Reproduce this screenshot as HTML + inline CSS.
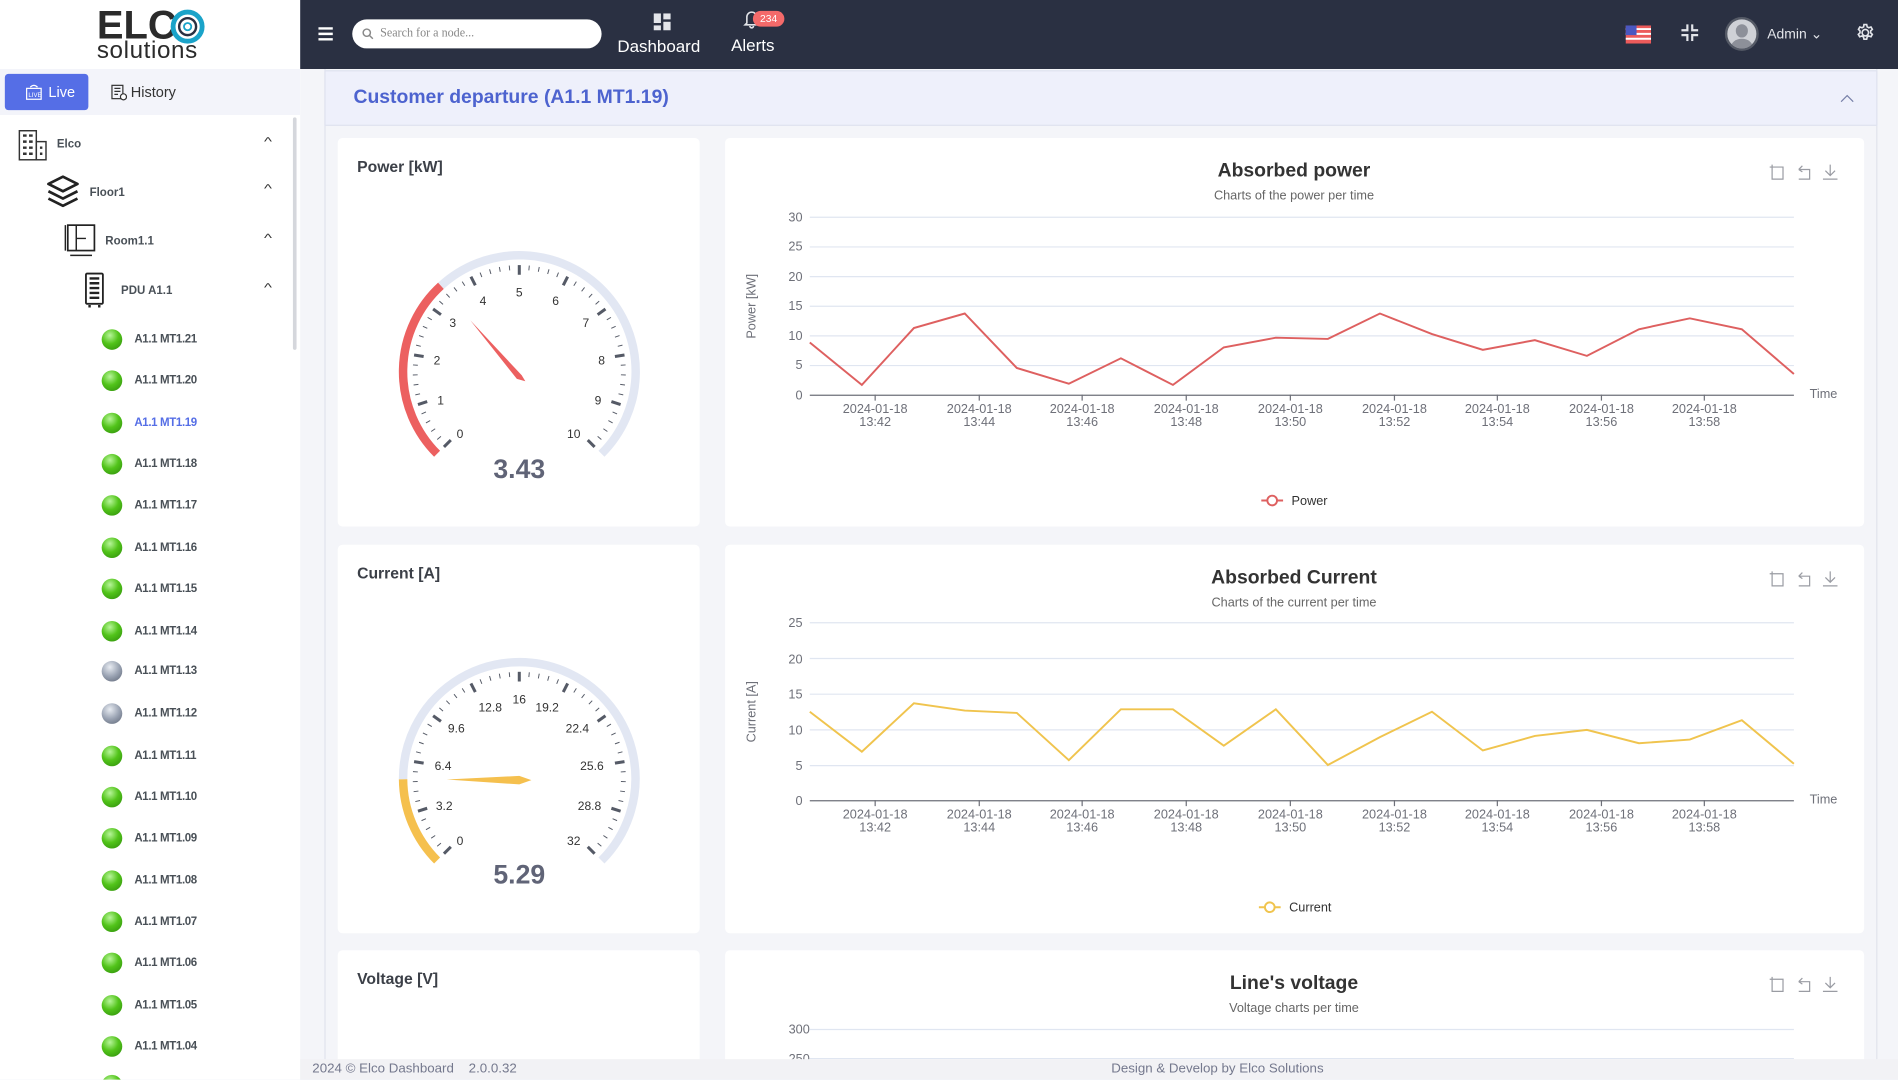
<!DOCTYPE html>
<html><head><meta charset="utf-8">
<style>
*{box-sizing:border-box;margin:0;padding:0}
html,body{width:1898px;height:1080px;overflow:hidden;background:#f4f5f9;font-family:"Liberation Sans",sans-serif}
#w{position:absolute;left:0;top:0;width:1568px;height:892px;transform:scale(1.21046);transform-origin:0 0;background:#f4f5f9;overflow:hidden}
.abs{position:absolute}
#side{left:0;top:0;width:248px;height:892px;background:#fff;overflow:hidden}
#hdr{left:248px;top:0;width:1320px;height:57px;background:#2a3042}
.card{position:absolute;background:#fff;border-radius:4px}
.item{position:absolute;left:84px;height:18px;font-size:9.5px;font-weight:bold;color:#495057;letter-spacing:-0.3px}
.ball{position:absolute;left:0;top:0;width:17px;height:17px;border-radius:50%;background:radial-gradient(circle at 40% 30%,#b8f59a 0%,#52c41a 45%,#2c8a0a 100%)}
.ball.g{background:radial-gradient(circle at 40% 30%,#e8ecf2 0%,#9aa3b3 50%,#5b6373 100%)}
.item span{position:absolute;left:27px;top:3px;white-space:nowrap}
svg text{font-family:"Liberation Sans",sans-serif}
</style></head><body>
<div id="w">
<!-- sidebar -->
<div id="side" class="abs">
  <div class="abs" style="left:80px;top:4px;font-size:33px;font-weight:bold;color:#2b2b2b;letter-spacing:0px;line-height:34px">ELC</div>
  <svg class="abs" style="left:140px;top:7px" width="32" height="30"><circle cx="15" cy="15" r="12" fill="none" stroke="#1aa3c9" stroke-width="4"/><circle cx="15" cy="15" r="7" fill="none" stroke="#2a3042" stroke-width="2"/><circle cx="15" cy="15" r="3" fill="none" stroke="#1aa3c9" stroke-width="1.5"/></svg>
  <div class="abs" style="left:80px;top:32px;font-size:20px;color:#2b2b2b;line-height:20px;letter-spacing:0.5px">solutions</div>
  <div class="abs" style="left:0;top:57px;width:248px;height:38px;background:#f3f4fa"></div>
  <div class="abs" style="left:4px;top:61px;width:69px;height:30px;background:#556ee6;border-radius:3px;color:#fff;font-size:12px;line-height:30px;padding-left:36px">Live</div>
  <svg class="abs" style="left:21px;top:69px" width="14" height="14"><rect x="1" y="4" width="12" height="9" fill="none" stroke="#fff"/><text x="2.5" y="11" font-size="5" fill="#fff">LIVE</text><path d="M4 3 Q7 0 10 3" stroke="#fff" fill="none"/></svg>
  <svg class="abs" style="left:91px;top:69px" width="14" height="14"><rect x="1.5" y="1.5" width="9" height="11" fill="none" stroke="#333"/><path d="M3.5 4h5M3.5 6.5h5M3.5 9h3" stroke="#333"/><circle cx="11" cy="11" r="2.5" fill="#fff" stroke="#333"/></svg>
  <div class="abs" style="left:108px;top:69px;font-size:12px;color:#333">History</div>
  <svg class="abs" style="left:14px;top:107px" width="26" height="26"><rect x="2" y="1" width="14" height="24" fill="none" stroke="#333" stroke-width="1.2"/><rect x="16" y="10" width="8" height="15" fill="none" stroke="#333" stroke-width="1.2"/><path d="M5 5h3M10 5h3M5 10h3M10 10h3M5 15h3M10 15h3M5 20h3M10 20h3M19 15h2M19 20h2" stroke="#333" stroke-width="2"/></svg>
  <div class="abs" style="left:47px;top:114px;font-size:9.5px;font-weight:bold;color:#495057">Elco</div>
  <svg class="abs" style="left:37px;top:143px" width="30" height="30"><path d="M15 3 L27 9 L15 15 L3 9Z M3 15 L15 21 L27 15 M3 21 L15 27 L27 21" fill="none" stroke="#222" stroke-width="2.2" stroke-linejoin="round"/></svg>
  <div class="abs" style="left:74px;top:154px;font-size:9.5px;font-weight:bold;color:#495057">Floor1</div>
  <svg class="abs" style="left:52px;top:184px" width="30" height="30"><rect x="4" y="2" width="22" height="21" fill="none" stroke="#222" stroke-width="1.4"/><path d="M11 2v21M11 13h8M2 2v21M6 27h18" stroke="#222" stroke-width="1.2"/></svg>
  <div class="abs" style="left:87px;top:194px;font-size:9.5px;font-weight:bold;color:#495057">Room1.1</div>
  <svg class="abs" style="left:69px;top:225px" width="20" height="30"><rect x="2" y="1" width="14" height="25" rx="1" fill="none" stroke="#222" stroke-width="1.5"/><path d="M5 5h8M5 9h8M5 13h8M5 17h8M5 21h8" stroke="#222" stroke-width="2"/><path d="M4 28h2M12 28h2" stroke="#222" stroke-width="2"/></svg>
  <div class="abs" style="left:100px;top:235px;font-size:9.5px;font-weight:bold;color:#495057">PDU A1.1</div>
  <div class="abs" style="left:219px;top:112px;font-size:10px;color:#333;transform:scaleX(1.4)">^</div>
  <div class="abs" style="left:219px;top:151px;font-size:10px;color:#333;transform:scaleX(1.4)">^</div>
  <div class="abs" style="left:219px;top:192px;font-size:10px;color:#333;transform:scaleX(1.4)">^</div>
  <div class="abs" style="left:219px;top:233px;font-size:10px;color:#333;transform:scaleX(1.4)">^</div>
  <div class="abs" style="left:242px;top:97px;width:3px;height:192px;background:#d5d7dc;border-radius:2px"></div>
  <div class="item" style="top:272px"><div class="ball"></div><span>A1.1 MT1.21</span></div>
  <div class="item" style="top:306px"><div class="ball"></div><span>A1.1 MT1.20</span></div>
  <div class="item" style="top:341px"><div class="ball"></div><span style="color:#556ee6">A1.1 MT1.19</span></div>
  <div class="item" style="top:375px"><div class="ball"></div><span>A1.1 MT1.18</span></div>
  <div class="item" style="top:409px"><div class="ball"></div><span>A1.1 MT1.17</span></div>
  <div class="item" style="top:444px"><div class="ball"></div><span>A1.1 MT1.16</span></div>
  <div class="item" style="top:478px"><div class="ball"></div><span>A1.1 MT1.15</span></div>
  <div class="item" style="top:513px"><div class="ball"></div><span>A1.1 MT1.14</span></div>
  <div class="item" style="top:546px"><div class="ball g"></div><span>A1.1 MT1.13</span></div>
  <div class="item" style="top:581px"><div class="ball g"></div><span>A1.1 MT1.12</span></div>
  <div class="item" style="top:616px"><div class="ball"></div><span>A1.1 MT1.11</span></div>
  <div class="item" style="top:650px"><div class="ball"></div><span>A1.1 MT1.10</span></div>
  <div class="item" style="top:684px"><div class="ball"></div><span>A1.1 MT1.09</span></div>
  <div class="item" style="top:719px"><div class="ball"></div><span>A1.1 MT1.08</span></div>
  <div class="item" style="top:753px"><div class="ball"></div><span>A1.1 MT1.07</span></div>
  <div class="item" style="top:787px"><div class="ball"></div><span>A1.1 MT1.06</span></div>
  <div class="item" style="top:822px"><div class="ball"></div><span>A1.1 MT1.05</span></div>
  <div class="item" style="top:856px"><div class="ball"></div><span>A1.1 MT1.04</span></div>
  <div class="item" style="top:888px"><div class="ball"></div></div>
</div>
<div id="hdr" class="abs">
  <svg class="abs" style="left:15px;top:22px" width="12" height="12"><path d="M0 1.5h12M0 6h12M0 10.5h12" stroke="#fff" stroke-width="2"/></svg>
  <div class="abs" style="left:43px;top:16px;width:206px;height:24px;background:#fff;border-radius:12px"></div>
  <svg class="abs" style="left:51px;top:23px" width="10" height="10"><circle cx="4" cy="4" r="3" fill="none" stroke="#888" stroke-width="1.2"/><path d="M6.3 6.3L9 9" stroke="#888" stroke-width="1.2"/></svg>
  <div class="abs" style="left:66px;top:22px;font-size:10px;color:#888;font-family:'Liberation Serif',serif">Search for a node...</div>
  <svg class="abs" style="left:292px;top:11px" width="15" height="15"><rect x="0" y="0" width="6" height="8" fill="#e3e5ea"/><rect x="8" y="0" width="6" height="5" fill="#e3e5ea"/><rect x="0" y="10" width="6" height="4" fill="#e3e5ea"/><rect x="8" y="7" width="6" height="7" fill="#e3e5ea"/></svg>
  <div class="abs" style="left:262px;top:30px;font-size:14px;color:#fff">Dashboard</div>
  <svg class="abs" style="left:366px;top:8px" width="14" height="16"><path d="M3 11 V6 A4 4 0 0 1 11 6 V11 L12.5 12.5 H1.5Z M5.5 13.5 A1.5 1.5 0 0 0 8.5 13.5" fill="none" stroke="#e3e5ea" stroke-width="1.3"/></svg>
  <div class="abs" style="left:374px;top:9px;width:26px;height:13px;background:#f46a6a;border-radius:7px;font-size:8.5px;color:#fff;text-align:center;line-height:13px">234</div>
  <div class="abs" style="left:356px;top:29px;font-size:14px;color:#fff">Alerts</div>
  <svg class="abs" style="left:1095px;top:21px" width="21" height="15"><rect width="21" height="15" fill="#ec5b5b"/><path d="M0 3h21M0 7h21M0 11h21" stroke="#fff" stroke-width="1.6"/><rect width="9" height="8" fill="#4a57c0"/></svg>
  <svg class="abs" style="left:1141px;top:20px" width="14" height="14"><path d="M5 0v5H0M9 0v5h5M5 14V9H0M9 14V9h5" fill="none" stroke="#e3e5ea" stroke-width="1.8"/></svg>
  <div class="abs" style="left:1177px;top:14px;width:28px;height:28px;border-radius:50%;background:#cfd1d6;border:2px solid #555a66;overflow:hidden"><div style="position:absolute;left:7px;top:4px;width:10px;height:11px;border-radius:50%;background:#8d9099"></div><div style="position:absolute;left:3px;top:16px;width:18px;height:14px;border-radius:50%;background:#8d9099"></div></div>
  <div class="abs" style="left:1212px;top:21px;font-size:11.5px;color:#e3e5ea">Admin ⌄</div>
  <svg class="abs" style="left:1285px;top:19px" width="16" height="16" viewBox="0 0 24 24"><path d="M12 8a4 4 0 1 0 0 8a4 4 0 1 0 0-8z M10.3 2h3.4l.6 2.8 2 1.1 2.7-.9 1.7 2.9-2.1 1.9v2.4l2.1 1.9-1.7 2.9-2.7-.9-2 1.1-.6 2.8h-3.4l-.6-2.8-2-1.1-2.7.9-1.7-2.9 2.1-1.9V9.8L3.5 7.9l1.7-2.9 2.7.9 2-1.1z" fill="none" stroke="#e3e5ea" stroke-width="2"/></svg>
</div>
<div class="abs" style="left:268px;top:57px;width:1283px;height:830px;border-left:1px solid #e1e3ec;border-right:1px solid #e1e3ec"></div>
<div class="abs" style="left:268px;top:58px;width:1283px;height:46px;background:#eef0fb;border:1px solid #dfe2ef"></div>
<div class="abs" style="left:292px;top:72px;font-size:16px;font-weight:bold;color:#4d63cf">Customer departure (A1.1 MT1.19)</div>
<svg class="abs" style="left:1520px;top:77px" width="12" height="8"><path d="M1 7L6 2L11 7" fill="none" stroke="#7780a8" stroke-width="1"/></svg>

<div class="card" style="left:279px;top:114px;width:299px;height:321px">
  <div class="abs" style="left:16px;top:16px;font-size:13px;font-weight:bold;color:#3c4048">Power [kW]</div>
  <svg class="abs" style="left:0;top:0" width="299" height="321">
    <path d="M82.1 260.9 A96 96 0 0 1 85.3 122.1" fill="none" stroke="#ec6060" stroke-width="7"/>
    <path d="M85.3 122.1 A96 96 0 0 1 217.9 260.9" fill="none" stroke="#e2e7f3" stroke-width="7"/>
    <g id="t1" stroke="#555a66"></g>
    <g font-size="10" fill="#333" text-anchor="middle">
      <text x="101" y="248">0</text><text x="85" y="220">1</text><text x="82" y="187">2</text><text x="95" y="156">3</text><text x="120" y="138">4</text><text x="150" y="131">5</text><text x="180" y="138">6</text><text x="205" y="156">7</text><text x="218" y="187">8</text><text x="215" y="220">9</text><text x="195" y="248">10</text>
    </g>
    <polygon points="109.5,150.6 152,196 155,201 148,199" fill="#ec6060"/>
    <text x="150" y="281" font-size="22" font-weight="bold" fill="#606477" text-anchor="middle">3.43</text>
  </svg>
</div>
<div class="card" style="left:279px;top:450px;width:299px;height:321px">
  <div class="abs" style="left:16px;top:16px;font-size:13px;font-weight:bold;color:#3c4048">Current [A]</div>
  <svg class="abs" style="left:0;top:0" width="299" height="321">
    <path d="M82.1 260.9 A96 96 0 0 1 54 193.7" fill="none" stroke="#f5c04e" stroke-width="7"/>
    <path d="M54 193.7 A96 96 0 1 1 217.9 260.9" fill="none" stroke="#e2e7f3" stroke-width="7"/>
    <g id="t2" stroke="#555a66"></g>
    <g font-size="10" fill="#333" text-anchor="middle">
      <text x="101" y="248">0</text><text x="88" y="219">3.2</text><text x="87" y="186">6.4</text><text x="98" y="155">9.6</text><text x="126" y="138">12.8</text><text x="150" y="131">16</text><text x="173" y="138">19.2</text><text x="198" y="155">22.4</text><text x="210" y="186">25.6</text><text x="208" y="219">28.8</text><text x="195" y="248">32</text>
    </g>
    <polygon points="90,194 150,191 160,194.5 150,198" fill="#f5c04e"/>
    <text x="150" y="280" font-size="22" font-weight="bold" fill="#606477" text-anchor="middle">5.29</text>
  </svg>
</div>
<div class="card" style="left:279px;top:785px;width:299px;height:100px">
  <div class="abs" style="left:16px;top:16px;font-size:13px;font-weight:bold;color:#3c4048">Voltage [V]</div>
</div>

<div class="card" style="left:599px;top:114px;width:941px;height:321px">
<svg width="941" height="321">
  <text x="470" y="32" font-size="16" font-weight="bold" fill="#333" text-anchor="middle">Absorbed power</text>
  <text x="470" y="51" font-size="10.5" fill="#666" text-anchor="middle">Charts of the power per time</text>
  <g fill="none" stroke="#9a9ca3" stroke-width="1"><path d="M865 24h9v10h-9zM863 24h2M865 22v2"/><path d="M887 26h9v8h-9M887 26l3-3M887 26l3 2"/><path d="M913 22v9M909 27l4 4 4-4M907 34h12"/></g>
  <g stroke="#e0e6f1"><path d="M70 65.5h813M70 90h813M70 114.5h813M70 139h813M70 163.5h813M70 188h813"/></g>
  <path d="M70 212.5h813" stroke="#6e7079"/>
  <g stroke="#6e7079"><path d="M124 212v5M210 212v5M295 212v5M381 212v5M467 212v5M553 212v5M638 212v5M724 212v5M809 212v5"/></g>
  <g font-size="10.5" fill="#6e7079" text-anchor="end"><text x="64" y="69">30</text><text x="64" y="93">25</text><text x="64" y="118">20</text><text x="64" y="142">15</text><text x="64" y="167">10</text><text x="64" y="191">5</text><text x="64" y="216">0</text></g>
  <text transform="translate(25,139) rotate(-90)" font-size="10.5" fill="#6e7079" text-anchor="middle">Power [kW]</text>
  <text x="896" y="215" font-size="10.5" fill="#6e7079">Time</text>
  <g font-size="10.5" fill="#6e7079" text-anchor="middle">
   <text x="124" y="227">2024-01-18</text><text x="124" y="238">13:42</text>
   <text x="210" y="227">2024-01-18</text><text x="210" y="238">13:44</text>
   <text x="295" y="227">2024-01-18</text><text x="295" y="238">13:46</text>
   <text x="381" y="227">2024-01-18</text><text x="381" y="238">13:48</text>
   <text x="467" y="227">2024-01-18</text><text x="467" y="238">13:50</text>
   <text x="553" y="227">2024-01-18</text><text x="553" y="238">13:52</text>
   <text x="638" y="227">2024-01-18</text><text x="638" y="238">13:54</text>
   <text x="724" y="227">2024-01-18</text><text x="724" y="238">13:56</text>
   <text x="809" y="227">2024-01-18</text><text x="809" y="238">13:58</text>
  </g>
  <polyline fill="none" stroke="#de6060" stroke-width="1.6" points="70,169 113,204 156,157 198,145 241,190 284,203 327,182 370,204 412,173 455,165 498,166 541,145 584,162 626,175 669,167 712,180 755,158 797,149 840,158 883,195"/>
  <path d="M443 299.5h18" stroke="#de6060" stroke-width="1.6"/><circle cx="452" cy="299.5" r="4" fill="#fff" stroke="#de6060" stroke-width="1.6"/>
  <text x="468" y="303" font-size="10.5" fill="#333">Power</text>
</svg>
</div>
<div class="card" style="left:599px;top:450px;width:941px;height:321px">
<svg width="941" height="321">
  <text x="470" y="32" font-size="16" font-weight="bold" fill="#333" text-anchor="middle">Absorbed Current</text>
  <text x="470" y="51" font-size="10.5" fill="#666" text-anchor="middle">Charts of the current per time</text>
  <g fill="none" stroke="#9a9ca3" stroke-width="1"><path d="M865 24h9v10h-9zM863 24h2M865 22v2"/><path d="M887 26h9v8h-9M887 26l3-3M887 26l3 2"/><path d="M913 22v9M909 27l4 4 4-4M907 34h12"/></g>
  <g stroke="#e0e6f1"><path d="M70 64.5h813M70 94h813M70 123.5h813M70 153h813M70 182.5h813"/></g>
  <path d="M70 211.5h813" stroke="#6e7079"/>
  <g stroke="#6e7079"><path d="M124 211v5M210 211v5M295 211v5M381 211v5M467 211v5M553 211v5M638 211v5M724 211v5M809 211v5"/></g>
  <g font-size="10.5" fill="#6e7079" text-anchor="end"><text x="64" y="68">25</text><text x="64" y="98">20</text><text x="64" y="127">15</text><text x="64" y="157">10</text><text x="64" y="186">5</text><text x="64" y="215">0</text></g>
  <text transform="translate(25,138) rotate(-90)" font-size="10.5" fill="#6e7079" text-anchor="middle">Current [A]</text>
  <text x="896" y="214" font-size="10.5" fill="#6e7079">Time</text>
  <g font-size="10.5" fill="#6e7079" text-anchor="middle">
   <text x="124" y="226">2024-01-18</text><text x="124" y="237">13:42</text>
   <text x="210" y="226">2024-01-18</text><text x="210" y="237">13:44</text>
   <text x="295" y="226">2024-01-18</text><text x="295" y="237">13:46</text>
   <text x="381" y="226">2024-01-18</text><text x="381" y="237">13:48</text>
   <text x="467" y="226">2024-01-18</text><text x="467" y="237">13:50</text>
   <text x="553" y="226">2024-01-18</text><text x="553" y="237">13:52</text>
   <text x="638" y="226">2024-01-18</text><text x="638" y="237">13:54</text>
   <text x="724" y="226">2024-01-18</text><text x="724" y="237">13:56</text>
   <text x="809" y="226">2024-01-18</text><text x="809" y="237">13:58</text>
  </g>
  <polyline fill="none" stroke="#f0c44e" stroke-width="1.6" points="70,138 113,171 156,131 198,137 241,139 284,178 327,136 370,136 412,166 455,136 498,182 541,159 584,138 626,170 669,158 712,153 755,164 797,161 840,145 883,181"/>
  <path d="M441 299.5h18" stroke="#f0c44e" stroke-width="1.6"/><circle cx="450" cy="299.5" r="4" fill="#fff" stroke="#f0c44e" stroke-width="1.6"/>
  <text x="466" y="303" font-size="10.5" fill="#333">Current</text>
</svg>
</div>
<div class="card" style="left:599px;top:785px;width:941px;height:100px">
<svg width="941" height="100">
  <text x="470" y="32" font-size="16" font-weight="bold" fill="#333" text-anchor="middle">Line's voltage</text>
  <text x="470" y="51" font-size="10.5" fill="#666" text-anchor="middle">Voltage charts per time</text>
  <g fill="none" stroke="#9a9ca3" stroke-width="1"><path d="M865 24h9v10h-9zM863 24h2M865 22v2"/><path d="M887 26h9v8h-9M887 26l3-3M887 26l3 2"/><path d="M913 22v9M909 27l4 4 4-4M907 34h12"/></g>
  <g stroke="#e0e6f1"><path d="M70 65.5h813M70 89.5h813"/></g>
  <g font-size="10.5" fill="#6e7079" text-anchor="end"><text x="70" y="69">300</text><text x="70" y="93">250</text></g>
</svg>
</div>
<div class="abs" style="left:248px;top:875px;width:1320px;height:17px;background:#f2f2f5"></div>
<div class="abs" style="left:258px;top:877px;font-size:11px;color:#74788d;white-space:pre">2024 © Elco Dashboard    2.0.0.32</div>
<div class="abs" style="left:918px;top:877px;font-size:11px;color:#74788d">Design &amp; Develop by Elco Solutions</div>
</div>
<script>
function ticks(id){var g=document.getElementById(id),cx=150,cy=193,s='';
for(var i=0;i<=50;i++){var a=(225-270*i/50)*Math.PI/180,maj=i%5==0,r1=88,r2=maj?80:84;
s+='<line x1="'+(cx+r1*Math.cos(a))+'" y1="'+(cy-r1*Math.sin(a))+'" x2="'+(cx+r2*Math.cos(a))+'" y2="'+(cy-r2*Math.sin(a))+'" stroke-width="'+(maj?2.5:0.8)+'"/>';}
g.innerHTML=s;}
ticks('t1');ticks('t2');
</script>
</body></html>
